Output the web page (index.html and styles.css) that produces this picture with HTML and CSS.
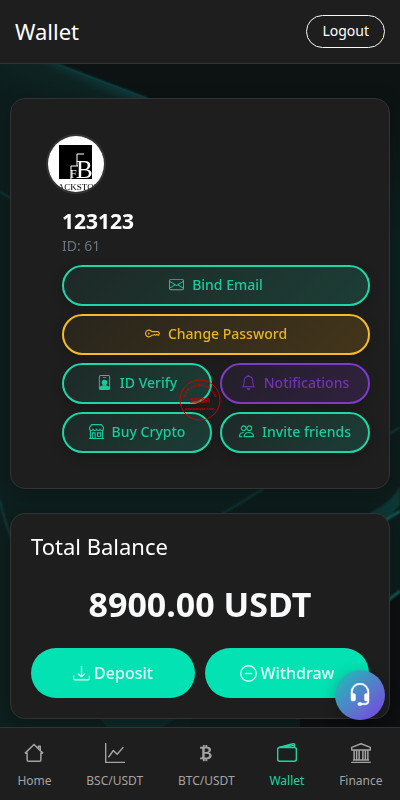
FILE: index.html
```html
<!DOCTYPE html>
<html lang="en">
<head>
<meta charset="utf-8">
<meta name="viewport" content="width=device-width, initial-scale=1">
<title>Wallet</title>
<link rel="stylesheet" href="styles.css">
</head>
<body>
<svg class="backdrop" viewBox="0 0 400 800" preserveAspectRatio="xMidYMid slice" aria-hidden="true">
  <defs>
    <linearGradient id="ray" gradientUnits="userSpaceOnUse" x1="80" y1="130" x2="106" y2="76"><stop offset="0" stop-color="#0d1d1d"/><stop offset="0.7" stop-color="#0d2423"/><stop offset="1" stop-color="#114040"/></linearGradient>
    <linearGradient id="side" x1="0" y1="0" x2="0" y2="1"><stop offset="0" stop-color="#0d1413"/><stop offset="0.3" stop-color="#0c2121"/><stop offset="1" stop-color="#0d1817"/></linearGradient>
    <filter id="soft" x="-20%" y="-20%" width="140%" height="140%"><feGaussianBlur stdDeviation="1"/></filter>
  </defs>
  <rect width="400" height="800" fill="#0d1212"/>
  <path d="M0 64H58L148 98 300 160V800H0z" fill="url(#ray)"/>
  <path d="M58 64 148 98" stroke="#145050" filter="url(#soft)"/>
  <path d="M300 110H400V600H300z" fill="url(#side)"/>
  <path d="M0 192 12 199" stroke="#176060" filter="url(#soft)"/>
  <path d="M0 480H278L210 520 190 727H0z" fill="#0d1f1e"/>
  <path d="M278 480H400V592L300 680 210 520z" fill="#0d1d1c"/>
  <path d="M0 500Q4 520 14 546M263 489 222 514M388 435 400 427" stroke="#19605e" fill="none" filter="url(#soft)"/>
  <path d="M350 520Q388 509 400 486V505L388 519z" fill="#0f3735" filter="url(#soft)"/>
  <path d="M384 521 400 511M386 602 400 591" stroke="#1b7472" stroke-width="2" filter="url(#soft)"/>
  <path d="M400 594V727H300V680z" fill="#0d0f10"/>
  <path d="M98 715H182L158 730H108z" fill="#0e2828"/>
</svg>

<header class="topbar">
  <h1 class="topbar-title">Wallet</h1>
  <button class="logout" type="button">Logout</button>
</header>

<main class="content">
  <section class="card profile">
    <svg class="avatar" viewBox="0 0 56 56" role="img" aria-label="Blackstone">
      <rect width="56" height="56" fill="#fff"/>
      <rect x="11" y="9" width="33" height="34" fill="#000"/>
      <g fill="#fff" font-family="Liberation Serif, serif">
        <text x="28" y="42" font-size="25">B</text>
        <text x="22" y="42" font-size="12">F</text>
      </g>
      <path d="M23 43V30H30M29 30V18H36" fill="none" stroke="#fff"/>
      <text x="28" y="54" font-size="9" text-anchor="middle" font-family="Liberation Serif, serif">BLACKSTONE</text>
    </svg>
    <div class="profile-body">
      <h2 class="user-name">123123</h2>
      <p class="user-id">ID: 61</p>
      <div class="actions">
        <button class="action wide" type="button">
          <svg class="icon" viewBox="0 0 16 16"><path d="M0 4a2 2 0 0 1 2-2h12a2 2 0 0 1 2 2v8a2 2 0 0 1-2 2H2a2 2 0 0 1-2-2zm2-1a1 1 0 0 0-1 1v.217l7 4.2 7-4.2V4a1 1 0 0 0-1-1zm13 2.383-4.708 2.825L15 11.105zm-.034 6.876-5.64-3.471L8 9.583l-1.326-.795-5.64 3.47A1 1 0 0 0 2 13h12a1 1 0 0 0 .966-.741M1 11.105l4.708-2.897L1 5.383z"/></svg>Bind Email</button>
        <button class="action wide amber" type="button">
          <svg class="icon" viewBox="0 0 16 16"><path d="M7.2 6H14l1.500 2L14 10l-1.300-1.100-1.300 1-1.300-1-1.400 1H7.200A3.600 3.600 0 1 1 7.200 6z" fill="none" stroke="currentColor" stroke-width="1.200" stroke-linejoin="round"/><circle cx="4" cy="8" r="1"/></svg>Change Password</button>
        <button class="action" type="button">
          <svg class="icon" viewBox="0 0 16 16"><path fill-rule="evenodd" d="M4 0h8a2 2 0 0 1 2 2v12a2 2 0 0 1-2 2H4a2 2 0 0 1-2-2V2a2 2 0 0 1 2-2zm0 1a1 1 0 0 0-1 1v10.800C3.900 11.700 5.700 11 8 11s4.100.7 5 1.800V2a1 1 0 0 0-1-1zM6.500 2h3a.5.5 0 0 1 0 1h-3a.5.5 0 0 1 0-1z"/><circle cx="8" cy="8" r="3"/></svg>ID Verify</button>
        <button class="action violet" type="button">
          <svg class="icon" viewBox="0 0 16 16"><path d="M8 16a2 2 0 0 0 2-2H6a2 2 0 0 0 2 2M8 1.918l-.797.161A4 4 0 0 0 4 6c0 .628-.134 2.197-.459 3.742-.16.767-.376 1.566-.663 2.258h10.244c-.287-.692-.502-1.49-.663-2.258C12.134 8.197 12 6.628 12 6a4 4 0 0 0-3.203-3.92zM14.22 12c.223.447.481.801.78 1H1c.299-.199.557-.553.78-1C2.68 10.2 3 6.88 3 6c0-2.42 1.72-4.44 4.005-4.901a1 1 0 1 1 1.99 0A5 5 0 0 1 13 6c0 .88.32 4.2 1.22 6"/></svg>Notifications</button>
        <button class="action" type="button">
          <svg class="icon line" viewBox="0 0 16 16"><path d="M2.800.6h10.400L15.500 4v1.300a1.900 1.900 0 0 1-3.750 0 1.900 1.900 0 0 1-3.750 0 1.900 1.900 0 0 1-3.750 0 1.900 1.900 0 0 1-3.750 0V4zM1.500 7.500v8M14.500 7.500v8M0 15.500h16M3.500 15.500v-6h3v6M9 9.500h3.500v3.500H9z"/></svg>Buy Crypto</button>
        <button class="action" type="button">
          <svg class="icon line" viewBox="0 0 16 16"><circle cx="5" cy="4.500" r="2.500"/><circle cx="11" cy="4.500" r="2.500"/><path d="M5.500 13.500c0-2.500 2-4.500 5-4.500s5 2 5 4.500zM3.500 13.500h-3C.5 11 2 9 5 9"/></svg>Invite friends</button>
      </div>
    </div>
  </section>

  <section class="card balance">
    <h2 class="balance-title">Total Balance</h2>
    <p class="amount">8900.00 USDT</p>
    <div class="transfer">
      <button class="primary" type="button">
        <svg class="icon line" viewBox="0 0 16 16"><path d="M.5 10v2.500a1.500 1.500 0 0 0 1.500 1.500h12a1.500 1.500 0 0 0 1.500-1.500V10M8 1v10M5 8.200l3 3 3-3"/></svg>Deposit</button>
      <button class="primary" type="button">
        <svg class="icon line" viewBox="0 0 16 16"><circle cx="8" cy="8" r="7.300"/><path d="M4.500 8h7"/></svg>Withdraw</button>
    </div>
  </section>
</main>

<button class="support" type="button" aria-label="Support">
  <svg viewBox="0 0 16 16"><path d="M8 1a5 5 0 0 0-5 5v1h1a1 1 0 0 1 1 1v3a1 1 0 0 1-1 1H3a1 1 0 0 1-1-1V6a6 6 0 1 1 12 0v6a2.500 2.500 0 0 1-2.500 2.500H9.366a1 1 0 0 1-.866.5h-1a1 1 0 1 1 0-2h1a1 1 0 0 1 .866.5H11.500A1.500 1.500 0 0 0 13 12h-1a1 1 0 0 1-1-1V8a1 1 0 0 1 1-1h1V6a5 5 0 0 0-5-5" stroke="currentColor" stroke-width=".3"/></svg>
</button>

<nav class="tabs">
  <a class="tab" href="#home"><svg class="line" viewBox="0 0 16 16"><path d="M2.500 7.500v6a1 1 0 0 0 1 1h9a1 1 0 0 0 1-1v-6M.7 8.300 8 1.200l7.300 7.100M11.500 4.500v-2h1.500V6"/></svg>Home</a>
  <a class="tab" href="#bsc"><svg class="line" viewBox="0 0 16 16"><path d="M.5 0v15.500H16M2.700 11.500 6.700 6l3 3 5-5.700"/></svg>BSC/USDT</a>
  <a class="tab" href="#btc"><svg viewBox="0 0 16 16"><path d="M5.500 13v1.250c0 .138.112.25.25.25h1a.25.25 0 0 0 .25-.25V13h.5v1.250c0 .138.112.25.25.25h1a.25.25 0 0 0 .25-.25V13h.084c1.992 0 3.416-1.033 3.416-2.820 0-1.502-1.007-2.323-2.186-2.440v-.088c.97-.242 1.683-.974 1.683-2.190C11.997 3.930 10.847 3 9.092 3H9V1.750a.25.25 0 0 0-.25-.25h-1a.25.25 0 0 0-.25.25V3h-.573V1.750a.25.25 0 0 0-.25-.25H5.750a.25.25 0 0 0-.25.25V3l-1.998.011a.25.25 0 0 0-.25.25v.989c0 .137.11.25.248.25l.755-.005a.75.75 0 0 1 .745.75v5.505a.75.75 0 0 1-.75.75l-.748.011a.25.25 0 0 0-.25.25v1c0 .138.112.25.25.25zm1.427-8.513h1.719c.906 0 1.438.498 1.438 1.312 0 .871-.575 1.362-1.877 1.362h-1.280zm0 4.051h1.840c1.137 0 1.756.58 1.756 1.524 0 .953-.626 1.450-2.158 1.450H6.927z"/></svg>BTC/USDT</a>
  <a class="tab active" href="#wallet" aria-current="page"><svg class="line" viewBox="0 0 16 16"><rect x=".5" y="3.500" width="15" height="11" rx="1.500"/><path d="M1.500 3.600 12.700.6a1 1 0 0 1 1.300 1v1.900M4.500 3.500l9-1.600"/></svg>Wallet</a>
  <a class="tab" href="#finance"><svg class="line" viewBox="0 0 16 16"><path d="M8 .6.5 3.500v2h15v-2zM1.500 13.500h13M.2 15.500h15.600M2.500 6v7.500M4.500 6v7.500M6.500 6v7.500M9.500 6v7.500M11.500 6v7.500M13.500 6v7.500"/></svg>Finance</a>
</nav>

<svg class="stamp" viewBox="0 0 42 42" aria-hidden="true">
  <defs><path id="stamp-arc" d="M6 22A15 15 0 0 1 36 22"/></defs>
  <circle cx="21" cy="21" r="20" fill="none" stroke="#cc0000"/>
  <g fill="#d00000" font-family="Liberation Sans, Noto Sans CJK SC, sans-serif" font-weight="bold" text-anchor="middle">
    <text font-size="4"><textPath href="#stamp-arc" startOffset="50%">www.paopaoym.com</textPath></text>
    <text x="21" y="23" font-size="5">跑跑源码</text>
    <text x="21" y="31" font-size="4">paopaoym.com</text>
  </g>
</svg>
</body>
</html>
```
FILE: styles.css
```css
* { box-sizing: border-box; }

body {
  margin: 0;
  padding-bottom: 81px;
  background: #0d1212;
  color: #fff;
  font-family: "Noto Sans", "Open Sans", sans-serif;
  font-size: 15px;
}

h1, h2, p { margin: 0; }

button {
  font: inherit;
  cursor: pointer;
}

svg {
  display: block;
  fill: currentColor;
}

.line {
  fill: none;
  stroke: currentColor;
  stroke-width: 1.2;
  stroke-linejoin: round;
}

.backdrop {
  position: fixed;
  inset: 0;
  width: 100%;
  height: 100%;
  z-index: -1;
}

.topbar {
  display: flex;
  align-items: center;
  justify-content: space-between;
  height: 64px;
  padding: 0 15px;
  background: #1e1e1e;
  border-bottom: 1px solid #333;
}

.topbar-title, .balance-title {
  padding-bottom: 2px;
  font-size: 22px;
  font-weight: 400;
  line-height: 26px;
}

.logout {
  padding: 4px 15px 6px;
  border: 1px solid #f8f9fa;
  border-radius: 20px;
  background: transparent;
  color: #fff;
  font-size: 14px;
  line-height: 21px;
}

.content {
  display: grid;
  gap: 24px;
  padding: 34px 10px 0;
}

.card {
  border: 1px solid #333;
  border-radius: 15px;
  background: #1e1e1e;
  box-shadow: 0 4px 20px rgba(0, 0, 0, .25);
}

.profile { padding: 35px 19px 35px 35px; }

.avatar {
  width: 60px;
  height: 60px;
  border: 2px solid #333;
  border-radius: 50%;
  color: #000;
}

.profile-body { padding: 14px 0 0 16px; }

.user-name {
  font-size: 21px;
  font-weight: 700;
  line-height: 26px;
}

.user-id {
  color: #6c757d;
  font-size: 14px;
  line-height: 23px;
}

.actions {
  display: grid;
  grid-template-columns: 1fr 1fr;
  gap: 8px;
  margin-top: 8px;
}

.action {
  display: flex;
  align-items: center;
  justify-content: center;
  gap: 8px;
  height: 41px;
  padding: 0 0 2px;
  border: 2px solid #1fd6a8;
  border-radius: 21px;
  background: linear-gradient(135deg, #1e2927, #1c3d35);
  color: #1cc99d;
  font-size: 14px;
  font-weight: 500;
  white-space: nowrap;
  box-shadow: 0 4px 12px rgba(0, 0, 0, .2);
}

.wide { grid-column: 1 / -1; }

.amber {
  border-color: #f5bd25;
  background: linear-gradient(135deg, #28251d, #43351a);
  color: #e9b422;
}

.violet {
  border-color: #7d3bc6;
  background: linear-gradient(135deg, #241f2a, #30213f);
  color: #7135b0;
}

.action .icon {
  width: 15px;
  height: 15px;
}

.balance { padding: 19px 20px 20px; }

.amount {
  margin: 20px 0 21px;
  font-size: 34px;
  font-weight: 700;
  line-height: 46px;
  text-align: center;
  color: #f8f9fa;
}

.transfer {
  display: grid;
  grid-template-columns: 1fr 1fr;
  gap: 10px;
}

.primary {
  display: flex;
  align-items: center;
  justify-content: center;
  gap: 4px;
  height: 50px;
  padding: 0;
  border: 0;
  border-radius: 25px;
  background: #03e2b3;
  color: #e2fff8;
  font-size: 16px;
  font-weight: 500;
}

.primary .icon {
  width: 17px;
  height: 17px;
}

.support {
  position: fixed;
  right: 15px;
  bottom: 80px;
  display: grid;
  place-items: center;
  width: 50px;
  height: 50px;
  padding: 0;
  border: 0;
  border-radius: 50%;
  background: linear-gradient(135deg, #16c5b4, #5c75cc 60%, #7a3ee6);
  color: #fff;
  box-shadow: 0 4px 15px rgba(0, 0, 0, .25);
}

.support svg {
  width: 24px;
  height: 24px;
}

.tabs {
  position: fixed;
  inset: auto 0 0;
  display: flex;
  justify-content: space-around;
  height: 73px;
  padding-top: 15px;
  border-top: 1px solid #333;
  background: #1e1e1e;
}

.tab {
  display: flex;
  flex-direction: column;
  align-items: center;
  gap: 9px;
  color: #a3a3a3;
  font-size: 12px;
  line-height: 18px;
  text-decoration: none;
}

.tab svg {
  width: 20px;
  height: 20px;
}

.active { color: #1cd6a0; }

.stamp {
  position: fixed;
  top: calc(50% - 21px);
  left: calc(50% - 21px);
  width: 42px;
  height: 42px;
  pointer-events: none;
}
```
